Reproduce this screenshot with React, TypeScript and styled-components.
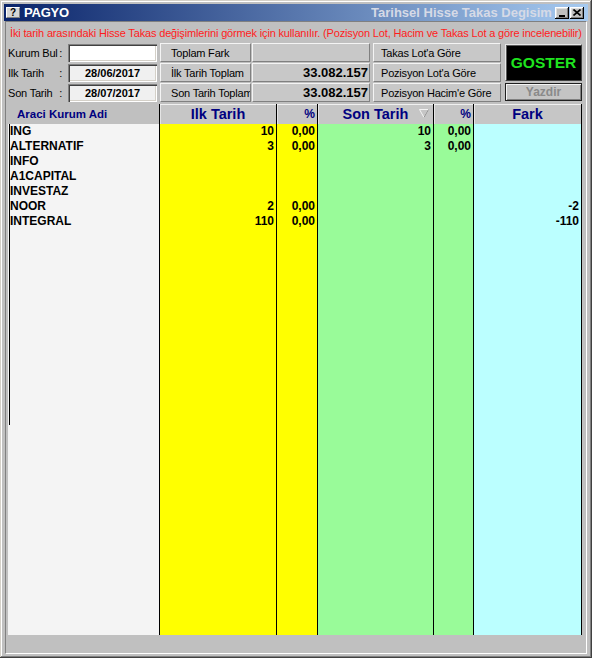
import React from "react";
import styled, { createGlobalStyle } from "styled-components";

const GlobalStyle = createGlobalStyle`
  html, body { margin: 0; padding: 0; background: #c0c0c0; }
  body { font-family: "Liberation Sans", Arial, sans-serif; }
  * { box-sizing: border-box; }
`;

const Window = styled.div`
  width: 592px;
  height: 658px;
  background: #c0c0c0;
  padding: 4px;
  display: flex;
  flex-direction: column;
  box-shadow: inset -1px -1px #404040, inset 1px 1px #d4d0c8,
    inset -2px -2px #808080, inset 2px 2px #ffffff;
`;

const TitleBar = styled.div`
  flex: none;
  height: 17px;
  display: flex;
  align-items: center;
  padding: 0 4px 0 2px;
  background: linear-gradient(to right, #0a246a, #a6caf0);
`;

const HelpIcon = styled.span`
  width: 14px;
  height: 11px;
  background: #d6d6d6;
  border: 1px solid #808080;
  border-top-color: #ffffff;
  border-left-color: #ffffff;
  color: #000;
  font: bold 10px "Liberation Sans", Arial, sans-serif;
  display: flex;
  align-items: center;
  justify-content: center;
`;

const AppName = styled.span`
  margin-left: 4px;
  color: #ffffff;
  font: bold 13px "Liberation Sans", Arial, sans-serif;
  letter-spacing: -0.2px;
`;

const WindowTitle = styled.span`
  margin-left: auto;
  width: 184px;
  overflow: hidden;
  white-space: nowrap;
  color: #d6dae6;
  font: bold 13px "Liberation Sans", Arial, sans-serif;
`;

const CaptionButton = styled.span<{ $gap: number }>`
  width: 14px;
  height: 12px;
  margin-left: ${(p) => p.$gap}px;
  background: #c0c0c0;
  box-shadow: inset -1px -1px #000000, inset 1px 1px #ffffff,
    inset -2px -2px #808080, inset 2px 2px #dfdfdf;
  display: flex;
  align-items: center;
  justify-content: center;
`;

const Panel = styled.div`
  flex: 1;
  min-height: 0;
  margin: 0 1px;
  border-top: 1px solid #808080;
  border-left: 1px solid #808080;
  border-right: 1px solid #ffffff;
  border-bottom: 1px solid #ffffff;
  padding: 0 0 18px 2px;
  display: flex;
  flex-direction: column;
`;

const InfoLine = styled.div`
  flex: none;
  height: 21px;
  padding-left: 2px;
  display: flex;
  align-items: center;
  color: #ff1c1c;
  font-size: 11px;
  letter-spacing: -0.16px;
  white-space: nowrap;
`;

const Controls = styled.div`
  flex: none;
  display: grid;
  grid-template-columns: 60px 89px 94px 119px 131px 81px;
  grid-template-rows: 19px 19px 19px;
  row-gap: 1px;
  font-size: 11px;
`;

const Label = styled.div<{ $row: number }>`
  grid-column: 1;
  grid-row: ${(p) => p.$row};
  width: 54px;
  display: flex;
  justify-content: space-between;
  align-items: center;
  color: #000;
  letter-spacing: -0.2px;
`;

const Sunken = styled.div<{ $row: number; $bg: string }>`
  grid-column: 2;
  grid-row: ${(p) => p.$row};
  margin-top: 1px;
  height: 18px;
  background: ${(p) => p.$bg};
  box-shadow: inset 1px 1px #808080, inset 2px 2px #404040,
    inset -1px -1px #ffffff, inset -2px -2px #d4d0c8;
  display: flex;
  align-items: center;
  justify-content: center;
  font-weight: bold;
  font-size: 11px;
  color: #000;
`;

const Raised = styled.div<{ $row: number; $col: number; $ml: number; $pad: number }>`
  grid-column: ${(p) => p.$col};
  grid-row: ${(p) => p.$row};
  margin-left: ${(p) => p.$ml}px;
  background: #c8c8c8;
  border-top: 1px solid #f4f4f4;
  border-left: 1px solid #f4f4f4;
  border-right: 1px solid #808080;
  border-bottom: 1px solid #808080;
  padding-left: ${(p) => p.$pad}px;
  display: flex;
  align-items: center;
  white-space: nowrap;
  overflow: hidden;
  color: #000;
  letter-spacing: -0.2px;
`;

const ValueBox = styled.div<{ $row: number }>`
  grid-column: 4;
  grid-row: ${(p) => p.$row};
  margin-left: 1px;
  background: #c8c8c8;
  border-top: 1px solid #f4f4f4;
  border-left: 1px solid #f4f4f4;
  border-right: 1px solid #808080;
  border-bottom: 1px solid #808080;
  padding-right: 1px;
  display: flex;
  align-items: center;
  justify-content: flex-end;
  font-weight: bold;
  font-size: 13px;
  color: #000;
`;

const ShowButton = styled.div`
  grid-column: 6;
  grid-row: 1 / span 2;
  margin: 1px 0 0 4px;
  height: 37px;
  background: #000;
  border-top: 1px solid #e8e8e8;
  border-left: 1px solid #e8e8e8;
  border-right: 1px solid #404040;
  border-bottom: 1px solid #404040;
  box-shadow: inset 1px 1px #5a5a5a;
  display: flex;
  align-items: center;
  justify-content: center;
  color: #1fe41f;
  font-weight: bold;
  font-size: 15.5px;
`;

const PrintButton = styled.div`
  grid-column: 6;
  grid-row: 3;
  margin-left: 4px;
  height: 18px;
  background: #c4c4c4;
  border: 1px solid #202020;
  box-shadow: inset 1px 1px #f4f4f4, inset -1px -1px #808080;
  display: flex;
  align-items: center;
  justify-content: center;
  color: #8a8a8a;
  font-weight: bold;
  font-size: 12px;
`;

const Grid = styled.div`
  flex: 1;
  min-height: 0;
  width: 574px;
  margin-top: 2px;
  display: flex;
  flex-direction: column;
`;

const HeaderRow = styled.div`
  flex: none;
  height: 20px;
  display: flex;
`;

const HeadCell = styled.div<{ $w: number; $align: string; $size: number; $plain?: boolean; $last?: boolean }>`
  position: relative;
  width: ${(p) => p.$w}px;
  flex: none;
  display: flex;
  align-items: center;
  justify-content: ${(p) => p.$align};
  padding: 0 2px 0 ${(p) => (p.$plain ? 9 : 2)}px;
  color: #000080;
  font-weight: bold;
  font-size: ${(p) => p.$size}px;
  background: ${(p) => (p.$plain ? "transparent" : "#c6c6c6")};
  border-left: ${(p) => (p.$plain ? "none" : "1px solid #000")};
  border-right: ${(p) => (p.$last ? "1px solid #000" : "none")};
  box-shadow: ${(p) => (p.$plain ? "none" : "inset 0 1px #f0f0f0, inset 1px 0 #e4e4e4")};
`;

const SortMark = styled.svg`
  position: absolute;
  right: 4px;
  top: 5px;
`;

const Body = styled.div`
  flex: 1;
  min-height: 0;
  display: flex;
`;

const Column = styled.div<{ $w: number; $bg: string; $edge: boolean; $last?: boolean }>`
  position: relative;
  width: ${(p) => p.$w}px;
  flex: none;
  background: ${(p) => p.$bg};
  border-left: ${(p) => (p.$edge ? "1px solid #000" : "none")};
  border-right: ${(p) => (p.$last ? "1px solid #000" : "none")};
`;

const Cell = styled.div<{ $align: string }>`
  height: 15px;
  line-height: 15px;
  padding: 0 2px;
  text-align: ${(p) => p.$align};
  white-space: nowrap;
  overflow: hidden;
  font-weight: bold;
  font-size: 12px;
  color: #000;
`;

const RowMarker = styled.div`
  position: absolute;
  left: 1px;
  top: 0;
  width: 1px;
  height: 301px;
  background: #000;
`;

type Row = [string, string, string, string, string, string];

const rows: Row[] = [
  ["ING", "10", "0,00", "10", "0,00", ""],
  ["ALTERNATIF", "3", "0,00", "3", "0,00", ""],
  ["INFO", "", "", "", "", ""],
  ["A1CAPITAL", "", "", "", "", ""],
  ["INVESTAZ", "", "", "", "", ""],
  ["NOOR", "2", "0,00", "", "", "-2"],
  ["INTEGRAL", "110", "0,00", "", "", "-110"],
];

const columns = [
  { title: "Araci Kurum Adi", w: 151, bg: "#f4f4f4", align: "left", size: 11.5, plain: true },
  { title: "Ilk Tarih", w: 117, bg: "#ffff00", align: "right", size: 14.5 },
  { title: "%", w: 41, bg: "#ffff00", align: "right", size: 12 },
  { title: "Son Tarih", w: 116, bg: "#99fb99", align: "right", size: 14.5, sort: true },
  { title: "%", w: 40, bg: "#99fb99", align: "right", size: 12 },
  { title: "Fark", w: 109, bg: "#bbffff", align: "right", size: 14.5, last: true },
];

export default function App() {
  return (
    <>
      <GlobalStyle />
      <Window>
        <TitleBar>
          <HelpIcon>?</HelpIcon>
          <AppName>PAGYO</AppName>
          <WindowTitle>Tarihsel Hisse Takas Degisim</WindowTitle>
          <CaptionButton $gap={0}>
            <svg width="8" height="8" viewBox="0 0 8 8">
              <rect x="1" y="6" width="6" height="2" fill="#000" />
            </svg>
          </CaptionButton>
          <CaptionButton $gap={1}>
            <svg width="8" height="7" viewBox="0 0 8 7">
              <path d="M0.5 0.5 L7.5 6.5 M7.5 0.5 L0.5 6.5" stroke="#000" strokeWidth="1.6" />
            </svg>
          </CaptionButton>
        </TitleBar>
        <Panel>
          <InfoLine>
            İki tarih arasındaki Hisse Takas değişimlerini görmek için kullanılır. (Pozisyon Lot, Hacim ve Takas Lot a göre incelenebilir)
          </InfoLine>
          <Controls>
            <Label $row={1}>
              <span>Kurum Bul</span>
              <span>:</span>
            </Label>
            <Label $row={2}>
              <span>Ilk Tarih</span>
              <span>:</span>
            </Label>
            <Label $row={3}>
              <span>Son Tarih</span>
              <span>:</span>
            </Label>
            <Sunken $row={1} $bg="#ffffff" />
            <Sunken $row={2} $bg="#f0f0f0">28/06/2017</Sunken>
            <Sunken $row={3} $bg="#f0f0f0">28/07/2017</Sunken>
            <Raised $row={1} $col={3} $ml={3} $pad={10}>Toplam Fark</Raised>
            <Raised $row={2} $col={3} $ml={3} $pad={10}>İlk Tarih Toplam</Raised>
            <Raised $row={3} $col={3} $ml={3} $pad={10}>Son Tarih Toplam</Raised>
            <ValueBox $row={1} />
            <ValueBox $row={2}>33.082.157</ValueBox>
            <ValueBox $row={3}>33.082.157</ValueBox>
            <Raised $row={1} $col={5} $ml={3} $pad={7}>Takas Lot'a Göre</Raised>
            <Raised $row={2} $col={5} $ml={3} $pad={7}>Pozisyon Lot'a Göre</Raised>
            <Raised $row={3} $col={5} $ml={3} $pad={7}>Pozisyon Hacim'e Göre</Raised>
            <ShowButton>GOSTER</ShowButton>
            <PrintButton>Yazdir</PrintButton>
          </Controls>
          <Grid>
            <HeaderRow>
              {columns.map((c, i) => (
                <HeadCell
                  key={i}
                  $w={c.w}
                  $align={c.plain ? "flex-start" : c.size > 13 ? "center" : "flex-end"}
                  $size={c.size}
                  $plain={c.plain}
                  $last={c.last}
                >
                  {c.title}
                  {c.sort && (
                    <SortMark width="10" height="9" viewBox="0 0 10 9">
                      <path d="M0.5 0.5 H9.5 L5 8.5 Z" fill="none" stroke="#f4f4f4" strokeWidth="1" />
                      <path d="M9.5 0.5 L5 8.5" stroke="#8c8c8c" strokeWidth="1" />
                    </SortMark>
                  )}
                </HeadCell>
              ))}
            </HeaderRow>
            <Body>
              {columns.map((c, i) => (
                <Column key={i} $w={c.w} $bg={c.bg} $edge={i > 0} $last={c.last}>
                  {i === 0 && <RowMarker />}
                  {rows.map((r, j) => (
                    <Cell key={j} $align={c.align}>
                      {r[i]}
                    </Cell>
                  ))}
                </Column>
              ))}
            </Body>
          </Grid>
        </Panel>
      </Window>
    </>
  );
}
